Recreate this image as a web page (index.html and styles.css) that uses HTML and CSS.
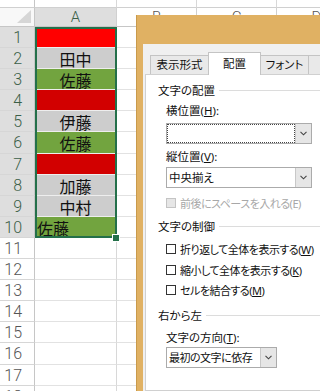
FILE: index.html
```html
<!DOCTYPE html>
<html lang="ja">
<head>
<meta charset="utf-8">
<link rel="stylesheet" href="styles.css">
</head>
<body>
<div class="sheet">
  <div class="c rh top"></div><div class="c top"></div><div class="c top"></div><div class="c top"></div><div class="c top"></div>
  <div class="c rh corner"><span class="tri"></span></div><div class="c ch sel-h">A</div><div class="c ch">B</div><div class="c ch">C</div><div class="c ch">D</div>

  <div class="c rh on">1</div><div class="c v red"></div><div class="c"></div><div class="c"></div><div class="c"></div>
  <div class="c rh on">2</div><div class="c v gray">田中</div><div class="c"></div><div class="c"></div><div class="c"></div>
  <div class="c rh on">3</div><div class="c v green">佐藤</div><div class="c"></div><div class="c"></div><div class="c"></div>
  <div class="c rh on">4</div><div class="c v dred"></div><div class="c"></div><div class="c"></div><div class="c"></div>
  <div class="c rh on">5</div><div class="c v gray">伊藤</div><div class="c"></div><div class="c"></div><div class="c"></div>
  <div class="c rh on">6</div><div class="c v green">佐藤</div><div class="c"></div><div class="c"></div><div class="c"></div>
  <div class="c rh on">7</div><div class="c v dred"></div><div class="c"></div><div class="c"></div><div class="c"></div>
  <div class="c rh on">8</div><div class="c v gray">加藤</div><div class="c"></div><div class="c"></div><div class="c"></div>
  <div class="c rh on">9</div><div class="c v gray">中村</div><div class="c"></div><div class="c"></div><div class="c"></div>
  <div class="c rh on">10</div><div class="c v green left">佐藤</div><div class="c"></div><div class="c"></div><div class="c"></div>
  <div class="c rh">11</div><div class="c"></div><div class="c"></div><div class="c"></div><div class="c"></div>
  <div class="c rh">12</div><div class="c"></div><div class="c"></div><div class="c"></div><div class="c"></div>
  <div class="c rh">13</div><div class="c"></div><div class="c"></div><div class="c"></div><div class="c"></div>
  <div class="c rh">14</div><div class="c"></div><div class="c"></div><div class="c"></div><div class="c"></div>
  <div class="c rh">15</div><div class="c"></div><div class="c"></div><div class="c"></div><div class="c"></div>
  <div class="c rh">16</div><div class="c"></div><div class="c"></div><div class="c"></div><div class="c"></div>
  <div class="c rh">17</div><div class="c"></div><div class="c"></div><div class="c"></div><div class="c"></div>
  <div class="c rh">18</div><div class="c"></div><div class="c"></div><div class="c"></div><div class="c"></div>
</div>

<div class="selection"></div>
<div class="handle"></div>

<div class="dlg">
  <div class="dlg-body">
    <div class="tabs">
      <div class="tab t1">表示形式</div>
      <div class="tab t2 active">配置</div>
      <div class="tab t3">フォント</div>
      <div class="tab t4">罫線</div>
    </div>
    <div class="panel">
      <div class="sect h1"><span>文字の配置</span><i></i></div>
      <div class="sub lbl l1">横位置(<u>H</u>):</div>
      <div class="sub sel s1">
        <div class="val focus"></div>
        <div class="btn"><svg width="7" height="5" viewBox="0 0 7 5"><polyline points="0.5,0.8 3.5,3.8 6.5,0.8" fill="none" stroke="#444" stroke-width="1.1"/></svg></div>
      </div>
      <div class="sub lbl l2">縦位置(<u>V</u>):</div>
      <div class="sub sel s2">
        <div class="val">中央揃え</div>
        <div class="btn"><svg width="7" height="5" viewBox="0 0 7 5"><polyline points="0.5,0.8 3.5,3.8 6.5,0.8" fill="none" stroke="#444" stroke-width="1.1"/></svg></div>
      </div>
      <div class="sub chk dis c0"><span class="box"></span><span class="tight">前後にスペースを入れる(E)</span></div>
      <div class="sect h2"><span>文字の制御</span><i></i></div>
      <div class="sub chk c1"><span class="box"></span><span class="tight">折り返して全体を表示する(<u>W</u>)</span></div>
      <div class="sub chk c2"><span class="box"></span><span class="tight">縮小して全体を表示する(<u>K</u>)</span></div>
      <div class="sub chk c3"><span class="box"></span><span class="tight">セルを結合する(<u>M</u>)</span></div>
      <div class="sect h3"><span>右から左</span><i></i></div>
      <div class="sub lbl l3">文字の方向(<u>T</u>):</div>
      <div class="sub sel s3">
        <div class="val tight">最初の文字に依存</div>
        <div class="btn"><svg width="7" height="5" viewBox="0 0 7 5"><polyline points="0.5,0.8 3.5,3.8 6.5,0.8" fill="none" stroke="#444" stroke-width="1.1"/></svg></div>
      </div>
    </div>
  </div>
</div>
</body>
</html>
```

FILE: styles.css
```css
html, body {
  margin: 0;
  padding: 0;
}
body {
  width: 320px;
  height: 391px;
  overflow: hidden;
  position: relative;
  background: #ffffff;
}

/* ---------- spreadsheet ---------- */
.sheet {
  display: grid;
  grid-template-columns: 35px 82px 80px 80px 80px;
  grid-template-rows: 8px 19px repeat(18, 21.1px);
  width: 357px;
}
.c {
  box-sizing: border-box;
  border-right: 1px solid #d8d8d8;
  border-bottom: 1px solid #e2e2e2;
  font-family: "Noto Sans CJK JP", sans-serif;
  font-size: 16px;
  color: #111;
  overflow: hidden;
  white-space: nowrap;
}
.top {
  border-bottom: 1px solid #d0d0d0;
}
.rh {
  font-family: Roboto, "Noto Sans", sans-serif;
  font-weight: 300;
  font-size: 16px;
  color: #555;
  text-align: right;
  padding-right: 12px;
  line-height: 21px;
  border-right: 1px solid #c6c6c6;
  border-bottom: 1px solid #d6d6d6;
  background: #ffffff;
}
.rh.on {
  background: #dedede;
  color: #3b5f48;
}
.rh.top {
  border-bottom: 1px solid #d0d0d0;
}
.corner {
  position: relative;
  background: #f8f8f8;
  border-bottom: 1px solid #c6c6c6;
}
.tri {
  position: absolute;
  right: 3px;
  bottom: 3px;
  width: 0;
  height: 0;
  border-left: 14px solid transparent;
  border-bottom: 13px solid #d6d6d6;
}
.ch {
  font-family: Roboto, "Noto Sans", sans-serif;
  font-weight: 300;
  font-size: 15px;
  color: #555;
  text-align: center;
  line-height: 19px;
  border-right: 1px solid #d0d0d0;
  border-bottom: 1px solid #c6c6c6;
}
.ch.sel-h {
  background: #dedede;
  color: #3b5f48;
}
.v {
  text-align: center;
  line-height: 19px;
  padding-top: 2px;
  overflow: visible;
  border-bottom-color: #eeeeee;
}
.v.left {
  text-align: left;
  padding-left: 2px;
}
.red { background: #ff0000; }
.dred { background: #d20000; }
.gray { background: #cdcdcd; }
.green { background: #72a43f; }

.selection {
  position: absolute;
  left: 35px;
  top: 27px;
  width: 82px;
  height: 211px;
  box-sizing: border-box;
  border: 2px solid #24704a;
}
.handle {
  position: absolute;
  left: 113px;
  top: 235px;
  width: 6px;
  height: 6px;
  box-sizing: border-box;
  background: #24704a;
  outline: 1px solid #ffffff;
}

/* ---------- dialog ---------- */
.dlg {
  position: absolute;
  left: 136px;
  top: 15px;
  right: 0;
  bottom: 0;
  box-sizing: border-box;
  background: #e0b163;
  border-left: 1px solid #c99a4b;
  padding: 29px 0 0 6px;
}
.dlg-body {
  box-sizing: border-box;
  height: 100%;
  background: #f0f0f0;
  padding-left: 2px;
  display: flex;
  flex-direction: column;
  font-family: "Noto Sans", "Noto Sans CJK JP", sans-serif;
  font-size: 11.5px;
  font-feature-settings: "palt";
  color: #111;
  white-space: nowrap;
  overflow: hidden;
}
.tight {
  font-size: 11px;
  letter-spacing: -0.5px;
}
.tabs {
  display: flex;
  align-items: flex-end;
  height: 30px;
  flex-shrink: 0;
  padding-left: 5px;
}
.tab {
  flex-shrink: 0;
  box-sizing: border-box;
  height: 19px;
  line-height: 18px;
  background: #e9e9e9;
  border: 1px solid #c4c4c4;
  border-bottom: none;
  margin-left: -1px;
  text-align: center;
}
.t1 { width: 59px; margin-left: 0; }
.t2 { width: 53px; }
.t3 { width: 49px; }
.t4 { width: 40px; padding-left: 14px; text-align: left; }
.tab.active {
  height: 23px;
  line-height: 22px;
  background: #ffffff;
  margin-bottom: -1px;
  position: relative;
  z-index: 2;
}
.panel {
  flex: 1;
  background: #ffffff;
  border: 1px solid #d0d0d0;
  border-right: none;
  padding: 6px 0 0 12px;
}
.sect {
  display: flex;
  align-items: center;
  height: 18px;
  gap: 4px;
}
.sect i {
  flex: 1;
  height: 1px;
  background: #dcdcdc;
}
.h2 { margin-top: 5px; }
.h3 { margin-top: 7px; }
.sub {
  margin-left: 8px;
}
.lbl {
  height: 18px;
  line-height: 18px;
}
.l1 { margin-top: 3px; }
.l2 { margin-top: 4px; }
.l3 { margin-top: 6px; height: 16px; line-height: 16px; }
u {
  text-decoration: underline;
  text-underline-offset: 1px;
}
.sel {
  box-sizing: border-box;
  display: flex;
  height: 21px;
  border: 1px solid #ababab;
  background: #ffffff;
}
.s1 { width: 146px; margin-top: 3px; }
.s2 { width: 146px; margin-top: 1px; }
.s3 { width: 111px; margin-top: 1px; }
.val {
  flex: 1;
  box-sizing: border-box;
  line-height: 19px;
  padding-left: 2px;
}
.val.focus {
  border: 1px dotted #444;
}
.btn {
  width: 15px;
  flex-shrink: 0;
  background: #e6e6e6;
  border-left: 1px solid #c8c8c8;
  display: flex;
  align-items: center;
  justify-content: center;
}
.chk {
  display: flex;
  align-items: center;
  gap: 4px;
  height: 18px;
}
.box {
  flex-shrink: 0;
  box-sizing: border-box;
  width: 10px;
  height: 10px;
  border: 1px solid #333;
  background: #fff;
}
.dis {
  color: #a8a8a8;
}
.dis .box {
  border-color: #c4c4c4;
  background: #e6e6e6;
}
.c0 { margin-top: 6px; }
.c1 { margin-top: 5px; }
.c2 { margin-top: 3px; }
.c3 { margin-top: 2px; }
```
